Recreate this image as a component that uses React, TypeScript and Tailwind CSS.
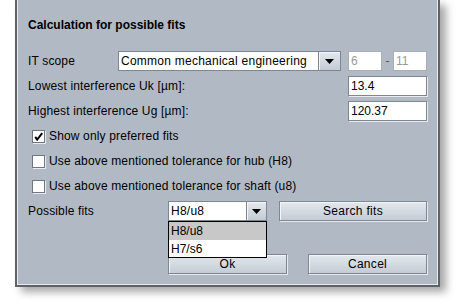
import React from 'react';

const Arrow: React.FC = () => (
  <svg width="9" height="5" viewBox="0 0 9 5">
    <polygon points="0,0 9,0 4.5,5" fill="#000" />
  </svg>
);

const Combo: React.FC<{ value: string; width: string; arrowWidth: string; children?: React.ReactNode }> = ({
  value,
  width,
  arrowWidth,
  children,
}) => (
  <div className={`relative flex h-[20px] ${width}`}>
    <div className="flex flex-1 items-center border border-[#7c8792] bg-white pl-[2px] leading-none tracking-[0.25px]">
      {value}
    </div>
    <div
      className={`flex ${arrowWidth} items-center justify-center border border-l-0 border-[#7c8792] bg-gradient-to-b from-[#e4e9ef] to-[#c2cad3] shadow-[inset_1px_1px_0_#f4f6f8]`}
    >
      <Arrow />
    </div>
    {children}
  </div>
);

const Field: React.FC<{ value: string; width: string; disabled?: boolean }> = ({ value, width, disabled }) => (
  <div
    className={`flex h-[20px] ${width} items-center bg-white pl-[2px] leading-none ${
      disabled ? 'border border-[#a7b0b9] text-[#9a9a9a]' : 'border border-[#7c8792] shadow-[1px_1px_0_#e8ecef]'
    }`}
  >
    {value}
  </div>
);

const Check: React.FC<{ label: string; checked?: boolean }> = ({ label, checked }) => (
  <div className="flex h-[20px] items-center gap-[4px] pl-[4px]">
    <div className="flex h-[13px] w-[13px] items-center justify-center border border-[#6e7882] bg-white shadow-[1px_1px_0_#e8ecef]">
      {checked && (
        <svg width="9" height="9" viewBox="0 0 9 9">
          <path d="M1.2 4.8 L3.2 7.6 L8.2 1.2" stroke="#000" strokeWidth="2" fill="none" />
        </svg>
      )}
    </div>
    <span className="tracking-[0.15px]">{label}</span>
  </div>
);

const Button: React.FC<{ label: string; width: string }> = ({ label, width }) => (
  <div
    className={`flex h-[20px] ${width} items-center justify-center border border-[#7c8792] bg-gradient-to-b from-[#e3e8ee] to-[#c4ccd5] shadow-[1px_1px_0_#e6eaee,inset_1px_1px_0_#f3f5f7] tracking-[0.3px]`}
  >
    {label}
  </div>
);

export default function App() {
  return (
    <div className="h-[303px] w-[456px] bg-white font-['Liberation_Sans',Arial,sans-serif] text-[12px] text-black">
      <div className="ml-[15px] h-[287px] w-[425px] bg-[#5f6367] px-[2px] pb-[2px] shadow-[6px_5px_8px_rgba(0,0,0,0.35)]">
        <div className="flex h-full flex-col border-x border-b border-[#e6eaee] bg-[#b1bac4] px-[10px] pt-[17px]">
          <div className="h-[16px] font-bold leading-[16px]">Calculation for possible fits</div>

          <div className="mt-[18px] flex flex-col gap-[5px]">
            <div className="flex h-[20px] items-center">
              <span className="w-[90px] tracking-[0.15px]">IT scope</span>
              <Combo value="Common mechanical engineering" width="w-[223px]" arrowWidth="w-[22px]" />
              <div className="ml-[7px] flex items-center">
                <Field value="6" width="w-[34px]" disabled />
                <span className="w-[11px] text-center text-[#555]">-</span>
                <Field value="11" width="w-[34px]" disabled />
              </div>
            </div>

            <div className="flex h-[20px] items-center">
              <span className="flex-1 tracking-[0.15px]">Lowest interference Uk [µm]:</span>
              <Field value="13.4" width="w-[79px]" />
            </div>

            <div className="flex h-[20px] items-center">
              <span className="flex-1 tracking-[0.15px]">Highest interference Ug [µm]:</span>
              <Field value="120.37" width="w-[79px]" />
            </div>

            <Check label="Show only preferred fits" checked />
            <Check label="Use above mentioned tolerance for hub (H8)" />
            <Check label="Use above mentioned tolerance for shaft (u8)" />

            <div className="flex h-[20px] items-center">
              <span className="w-[140px] tracking-[0.15px]">Possible fits</span>
              <Combo value="H8/u8" width="w-[99px]" arrowWidth="w-[20px]">
                <div className="absolute left-0 top-full z-10 flex w-full flex-col border border-black bg-white">
                  <div className="flex h-[18px] items-center bg-[#c8c8c8] pl-[2px]">H8/u8</div>
                  <div className="flex h-[17px] items-center pl-[2px]">H7/s6</div>
                </div>
              </Combo>
              <div className="ml-[12px] flex-1">
                <Button label="Search fits" width="w-full" />
              </div>
            </div>
          </div>

          <div className="mt-[33px] flex gap-[21px] pl-[140px]">
            <Button label="Ok" width="w-[119px]" />
            <Button label="Cancel" width="w-[119px]" />
          </div>
        </div>
      </div>
    </div>
  );
}
